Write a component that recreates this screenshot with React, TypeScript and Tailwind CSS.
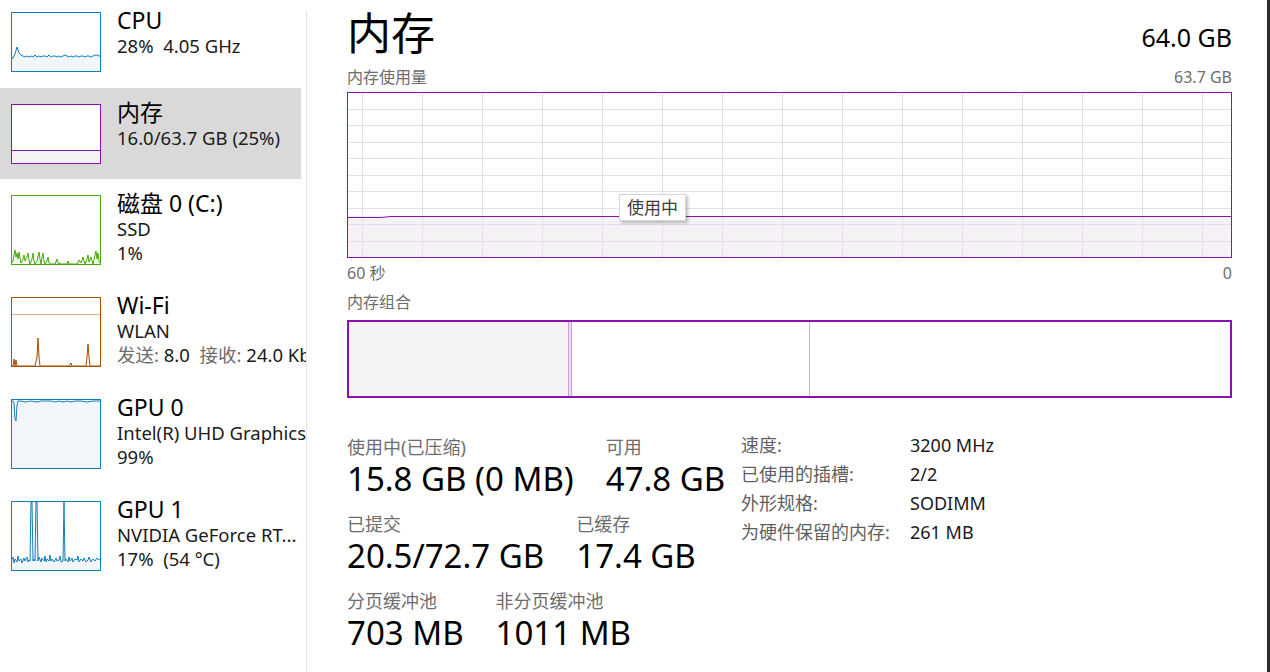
const FONT = "font-['Noto_Sans','Noto_Sans_CJK_SC',sans-serif]"

const BLUE = '#117dbb'
const BLUE_FILL = '#f1f6fa'
const PURPLE = '#8b12ae'
const PURPLE_FILL = '#f4f2f4'
const GREEN = '#4da60c'
const GREEN_FILL = '#eff7e9'
const BROWN = '#a74f01'
const BROWN_FILL = '#fcf3eb'

const cpuLine =
  '0,46 2,46 4,42 6,35 8,41 10,43 12,44 14,45 16,44 18,45 20,44 22,45 24,43 26,45 28,44 30,45 32,44 34,44 36,45 38,43 40,45 42,44 44,44 46,45 48,44 50,45 52,44 54,43 56,44 58,45 60,44 62,45 64,44 66,44 68,45 70,44 72,44 74,45 76,44 78,44 80,45 82,44 84,43 86,43 88,44 90,44'

const diskLine =
  '0,69 2,66 3,60 4,55 5,62 6,58 7,64 8,57 9,63 10,68 12,64 13,60 14,66 16,62 17,58 18,65 19,69 21,64 22,58 23,66 24,69 26,66 27,61 28,57 29,64 30,69 31,62 32,58 33,66 34,69 36,66 37,62 38,68 40,69 44,69 46,64 47,68 50,69 56,69 57,66 58,69 66,69 68,65 70,68 72,62 73,66 74,69 76,64 77,60 78,67 80,62 81,66 82,69 84,60 85,56 86,64 87,58 88,66 90,69'

const wifiLine =
  '0,69 2,69 3,62 4,69 5,63 6,69 24,69 26,60 27,41 28,60 29,69 58,69 60,66 61,69 75,69 76,60 77,47 78,60 79,69 90,69'

const gpu0Line =
  '0,2 2,2 3,4 4,20 5,22 6,6 7,2 10,2 14,3 20,2 26,3 30,2 40,2 44,3 48,2 52,3 56,2 60,3 64,2 70,2 76,3 82,2 90,2'

const gpu1Line =
  '0,60 2,56 3,62 4,58 6,61 7,55 8,60 10,58 11,62 13,57 14,60 16,56 17,61 18,59 19,60 20,1 21,1 22,60 23,58 24,60 25,1 26,1 27,60 28,56 30,61 31,57 33,60 34,55 35,61 36,58 38,60 39,54 40,60 41,58 43,61 45,57 46,60 48,59 49,55 50,61 52,60 53,1 54,60 55,58 57,61 58,56 59,60 61,57 62,61 64,58 66,59 67,55 68,61 70,58 72,60 73,57 75,61 77,59 78,56 80,61 82,58 84,60 86,57 88,59 90,58'

function Thumb({
  h,
  stroke,
  fill,
  line,
  extra,
}: {
  h: number
  stroke: string
  fill: string
  line: string
  extra?: React.ReactNode
}) {
  return (
    <svg width={90} height={h} viewBox={`0 0 90 ${h}`} className="block shrink-0">
      <rect x={0} y={0} width={90} height={h} fill="#ffffff" />
      {extra}
      <polygon points={`${line} 90,${h} 0,${h}`} fill={fill} />
      <polyline points={line} fill="none" stroke={stroke} strokeWidth={1} strokeLinejoin="round" />
      <rect x={0.5} y={0.5} width={89} height={h - 1} fill="none" stroke={stroke} strokeWidth={1} />
    </svg>
  )
}

function SideItem({
  thumb,
  title,
  children,
  selected,
  className,
}: {
  thumb: React.ReactNode
  title: string
  children: React.ReactNode
  selected?: boolean
  className?: string
}) {
  return (
    <div className={`flex w-[301px] gap-4 pl-[11px] ${selected ? 'bg-[#d9d9d9]' : ''} ${className ?? 'py-4'}`}>
      {thumb}
      <div className="-mt-[6px] flex h-0 flex-col whitespace-nowrap">
        <div className="text-[23px] leading-[28px] text-black">{title}</div>
        <div className="text-[18.5px] leading-[24px] text-[#1a1a1a]">{children}</div>
      </div>
    </div>
  )
}

function Stat({ label, value }: { label: string; value: string }) {
  return (
    <div className="flex flex-col whitespace-nowrap">
      <div className="text-[18px] leading-[24px] text-[#6d6d6d]">{label}</div>
      <div className="text-[33px] leading-[40px] text-black">{value}</div>
    </div>
  )
}

function UsageChart() {
  const W = 885
  const H = 166
  const rows = Array.from({ length: 9 }, (_, i) => 16.5 * (i + 1))
  const cols = Array.from({ length: 15 }, (_, i) => 15.5 + 60 * i)
  return (
    <svg width={W} height={H} viewBox={`0 0 ${W} ${H}`} className="block">
      <rect x={0} y={0} width={W} height={H} fill="#ffffff" />
      <rect x={0} y={124} width={W} height={H - 124} fill={PURPLE_FILL} />
      {rows.map((y) => (
        <line key={y} x1={0} x2={W} y1={Math.round(y) + 0.5} y2={Math.round(y) + 0.5} stroke="#e8dcec" strokeWidth={1} />
      ))}
      {cols.map((x) => (
        <line key={x} x1={x} x2={x} y1={0} y2={H} stroke="#e8dcec" strokeWidth={1} />
      ))}
      <polyline points="0,125.5 34,125.5 44,124.5 885,124.5" fill="none" stroke={PURPLE} strokeWidth={1} />
      <rect x={0.5} y={0.5} width={W - 1} height={H - 1} fill="none" stroke={PURPLE} strokeWidth={1} />
    </svg>
  )
}

export default function App() {
  return (
    <div className={`flex h-[672px] w-[1270px] overflow-hidden bg-white ${FONT}`}>
      {/* Sidebar */}
      <div className="w-[306px] shrink-0 overflow-hidden">
        <SideItem
          title="CPU"
          className="pt-[12px] pb-4"
          thumb={<Thumb h={60} stroke={BLUE} fill={BLUE_FILL} line={cpuLine} />}
        >
          28%&nbsp;&nbsp;4.05 GHz
        </SideItem>
        <SideItem
          title="内存"
          selected
          className="pt-4 pb-[15px]"
          thumb={<Thumb h={60} stroke={PURPLE} fill={PURPLE_FILL} line="0,46.5 90,46.5" />}
        >
          16.0/63.7 GB (25%)
        </SideItem>
        <SideItem title="磁盘 0 (C:)" thumb={<Thumb h={70} stroke={GREEN} fill={GREEN_FILL} line={diskLine} />}>
          <div>SSD</div>
          <div>1%</div>
        </SideItem>
        <SideItem
          title="Wi-Fi"
          thumb={
            <Thumb
              h={70}
              stroke={BROWN}
              fill={BROWN_FILL}
              line={wifiLine}
              extra={<line x1={0} x2={90} y1={17.5} y2={17.5} stroke="#dcb08c" strokeWidth={1} />}
            />
          }
        >
          <div>WLAN</div>
          <div>
            <span className="text-[#6d6d6d]">发送:</span> 8.0&nbsp;&nbsp;<span className="text-[#6d6d6d]">接收:</span> 24.0 Kbps
          </div>
        </SideItem>
        <SideItem title="GPU 0" thumb={<Thumb h={70} stroke={BLUE} fill={BLUE_FILL} line={gpu0Line} />}>
          <div>Intel(R) UHD Graphics</div>
          <div>99%</div>
        </SideItem>
        <SideItem title="GPU 1" thumb={<Thumb h={70} stroke={BLUE} fill={BLUE_FILL} line={gpu1Line} />}>
          <div>NVIDIA GeForce RT...</div>
          <div>17%&nbsp;&nbsp;(54 °C)</div>
        </SideItem>
      </div>

      {/* Divider */}
      <div className="mt-[11px] w-px shrink-0 bg-[#e4e4e4]" />

      {/* Main */}
      <div className="flex min-w-0 flex-1 flex-col pl-[40px] pr-[35px]">
        <div className="flex h-[62px] items-start justify-between">
          <div className="mt-[11px] text-[44px] leading-[44px] text-black">内存</div>
          <div className="mt-[22px] text-[25px] leading-[30px] text-black">64.0 GB</div>
        </div>
        <div className="flex h-[30px] items-center justify-between text-[16px] text-[#6d6d6d]">
          <span>内存使用量</span>
          <span>63.7 GB</span>
        </div>
        <div className="relative">
          <UsageChart />
          <div className="absolute left-[272px] top-[102px] flex h-[27px] w-[67px] items-center justify-center border border-[#d6d6d6] bg-white text-[17px] text-[#3a3a3a] shadow-[2px_2px_3px_rgba(0,0,0,0.25)]">
            使用中
          </div>
        </div>
        <div className="flex h-[29px] items-center justify-between text-[16px] text-[#6d6d6d]">
          <span>60 秒</span>
          <span>0</span>
        </div>
        <div className="flex h-[30px] items-center text-[16px] text-[#6d6d6d]">内存组合</div>
        <div className="mt-[3px] flex h-[78px] w-[885px] border-2 border-[#8b12ae]">
          <div className="w-[219px] bg-[#f4f2f4]" />
          <div className="w-[4px] border-x border-[#c6a3d2] bg-[#ecdcf0]" />
          <div className="w-[238px] border-r border-[#cbb5d8] bg-white" />
          <div className="flex-1 bg-white" />
        </div>

        {/* Stats */}
        <div className="mt-[33px] flex items-start">
          <div className="flex w-[394px] flex-col gap-[13px] pt-[4px]">
            <div className="flex gap-8">
              <Stat label="使用中(已压缩)" value="15.8 GB (0 MB)" />
              <Stat label="可用" value="47.8 GB" />
            </div>
            <div className="flex gap-8">
              <Stat label="已提交" value="20.5/72.7 GB" />
              <Stat label="已缓存" value="17.4 GB" />
            </div>
            <div className="flex gap-8">
              <Stat label="分页缓冲池" value="703 MB" />
              <Stat label="非分页缓冲池" value="1011 MB" />
            </div>
          </div>
          <div className="grid grid-cols-[169px_auto] content-start text-[18px] leading-[29px] whitespace-nowrap">
            <span className="text-[#5f5f5f]">速度:</span>
            <span className="text-[#1a1a1a]">3200 MHz</span>
            <span className="text-[#5f5f5f]">已使用的插槽:</span>
            <span className="text-[#1a1a1a]">2/2</span>
            <span className="text-[#5f5f5f]">外形规格:</span>
            <span className="text-[#1a1a1a]">SODIMM</span>
            <span className="text-[#5f5f5f]">为硬件保留的内存:</span>
            <span className="text-[#1a1a1a]">261 MB</span>
          </div>
        </div>
      </div>

      {/* Window edge */}
      <div className="w-[3px] shrink-0 bg-[#2b2b2b]" />
    </div>
  )
}
